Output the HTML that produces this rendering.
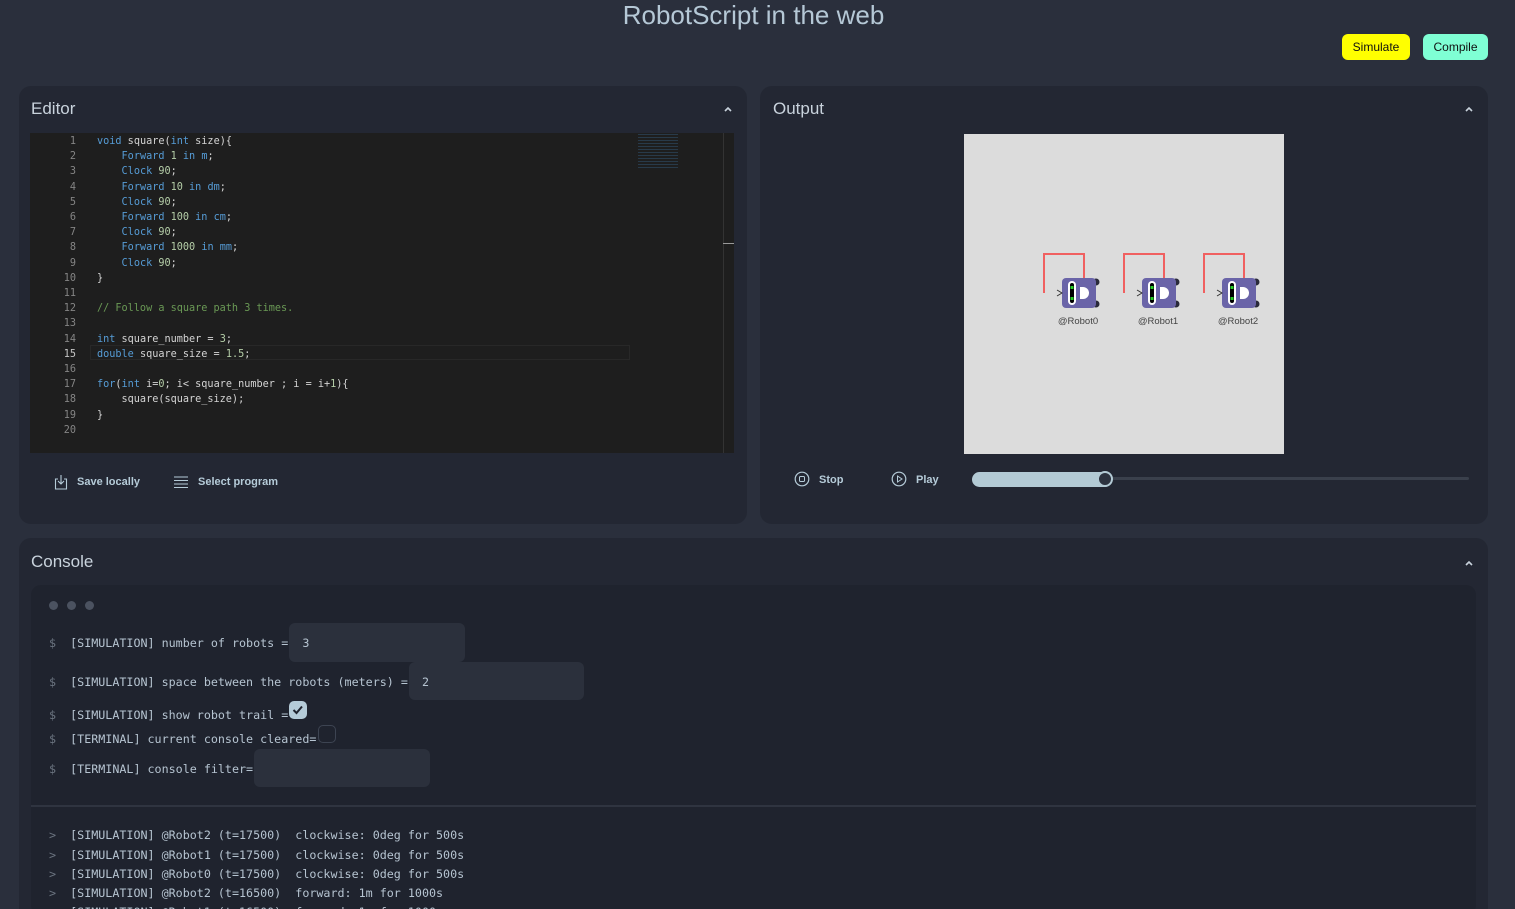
<!DOCTYPE html>
<html style="height:909px;overflow:hidden"><head><meta charset="utf-8"><style>
*{box-sizing:border-box;margin:0;padding:0}
body{width:1515px;height:909px;overflow:hidden;background:#2a2f3c;font-family:"Liberation Sans",sans-serif;color:#c9d3dd;position:relative}
.title{position:absolute;top:0;left:0;width:1507px;text-align:center;font-size:26px;color:#b5c8d6;line-height:30px}
.btn{position:absolute;top:34px;height:26px;border-radius:6px;font-size:12px;color:#111;line-height:26px;text-align:center}
.panel{position:absolute;background:#232733;border-radius:12px}
.ph{position:absolute;left:12px;top:13px;font-size:17px;color:#c9d3dd}
.car{position:absolute;top:18px;width:10px;height:10px}
.code{position:absolute;left:11px;top:47px;width:704px;height:320px;background:#1e1e1e;font-family:"DejaVu Sans Mono","Liberation Mono",monospace;font-size:10.2px;color:#d4d4d4}
.ln{position:absolute;left:0;width:46px;text-align:right;color:#858585}
.cl{position:absolute;left:67px;white-space:pre}
.k{color:#569cd6}.n{color:#b5cea8}.c{color:#6a9955}
.mono{font-family:"DejaVu Sans Mono","Liberation Mono",monospace}
.con{position:absolute;left:31px;top:585px;width:1445px;height:330px;background:#1f232e;border-radius:10px;font-size:11.7px;color:#b6c4d1}
.row{position:absolute;left:18px;white-space:pre}
.d{color:#6b7480}
.inp{position:absolute;background:#2b303c;border-radius:6px}
</style></head><body>
<div class="title">RobotScript in the web</div>
<div class="btn" style="left:1342px;width:68px;background:#ffff00">Simulate</div>
<div class="btn" style="left:1423px;width:65px;background:#7fffd4">Compile</div>

<div class="panel" style="left:19px;top:86px;width:728px;height:438px">
<div class="ph">Editor</div>
<svg class="car" style="left:704px" viewBox="0 0 10 10"><path d="M2 7L5 4L8 7" stroke="#c9d3dd" stroke-width="1.6" fill="none"/></svg>
<div class="code">
<div style="position:absolute;left:693px;top:0;width:1px;height:320px;background:#333"></div>
<div style="position:absolute;left:693px;top:110px;width:11px;height:1px;background:#999"></div>
<div style="position:absolute;left:60px;top:212px;width:540px;height:15px;border:1px solid #282828"></div>
<div style="position:absolute;left:608px;top:1px;width:40px;height:36px;opacity:.35;background:repeating-linear-gradient(#3a6d9a 0 1px,transparent 1px 3px)"></div>
<div id="lines"></div>
</div>
<div style="position:absolute;left:35px;top:390px;font-size:11px;font-weight:bold;color:#b5cbd8">
<svg style="position:absolute;left:0;top:-2px" width="14" height="16" viewBox="0 0 14 16"><path d="M4 5H1.5V15H12.5V5H10M7 1V10M4 7L7 10L10 7" stroke="#b5cbd8" fill="none" stroke-width="1.1"/></svg>
<span style="position:absolute;left:23px;white-space:nowrap">Save locally</span>
<svg style="position:absolute;left:120px;top:0" width="14" height="13" viewBox="0 0 14 13"><path d="M0 1H14M0 4.5H14M0 8H14M0 11.5H14" stroke="#b5cbd8" stroke-width="1.1"/></svg>
<span style="position:absolute;left:144px;white-space:nowrap">Select program</span>
</div>
</div>

<div class="panel" style="left:760px;top:86px;width:728px;height:438px">
<div class="ph" style="left:13px">Output</div>
<svg class="car" style="left:704px" viewBox="0 0 10 10"><path d="M2 7L5 4L8 7" stroke="#c9d3dd" stroke-width="1.6" fill="none"/></svg>
<svg style="position:absolute;left:204px;top:48px" width="320" height="320" viewBox="0 0 320 320">
<rect width="320" height="320" fill="#dcdcdc"/>
<g id="robots"></g>
</svg>
<svg style="position:absolute;left:34px;top:385px" width="16" height="16" viewBox="0 0 16 16"><circle cx="8" cy="8" r="6.8" stroke="#b5cbd8" fill="none" stroke-width="1.2"/><rect x="5.5" y="5.5" width="5" height="5" rx="1" stroke="#b5cbd8" fill="none"/></svg>
<div style="position:absolute;left:59px;top:388px;font-size:11px;font-weight:bold;color:#b5cbd8">Stop</div>
<svg style="position:absolute;left:131px;top:385px" width="16" height="16" viewBox="0 0 16 16"><circle cx="8" cy="8" r="6.8" stroke="#b5cbd8" fill="none" stroke-width="1.2"/><path d="M6.5 5L11 8L6.5 11Z" stroke="#b5cbd8" fill="none"/></svg>
<div style="position:absolute;left:156px;top:388px;font-size:11px;font-weight:bold;color:#b5cbd8">Play</div>
<div style="position:absolute;left:212px;top:391px;width:497px;height:3px;background:#3a404c;border-radius:2px"></div>
<div style="position:absolute;left:212px;top:386px;width:140px;height:15px;background:#b3cad5;border-radius:8px"></div>
<div style="position:absolute;left:337px;top:385px;width:16px;height:16px;background:#2d3340;border:2px solid #b3cad5;border-radius:50%"></div>
</div>

<div class="panel" style="left:19px;top:538px;width:1469px;height:400px">
<div class="ph" style="top:14px">Console</div>
<svg class="car" style="left:1445px;top:20px" viewBox="0 0 10 10"><path d="M2 7L5 4L8 7" stroke="#c9d3dd" stroke-width="1.6" fill="none"/></svg>
</div>
<div class="con mono">
<div style="position:absolute;left:18px;top:16px;width:9px;height:9px;border-radius:50%;background:#4b5260"></div>
<div style="position:absolute;left:36px;top:16px;width:9px;height:9px;border-radius:50%;background:#4b5260"></div>
<div style="position:absolute;left:54px;top:16px;width:9px;height:9px;border-radius:50%;background:#4b5260"></div>
<div class="inp" style="left:258px;top:38px;width:176px;height:39px"></div>
<div class="inp" style="left:378px;top:77px;width:175px;height:38px"></div>
<div class="inp" style="left:223px;top:164px;width:176px;height:38px"></div>
<div class="row" style="top:51px"><span class="d">$</span>  [SIMULATION] number of robots =  3</div>
<div class="row" style="top:90px"><span class="d">$</span>  [SIMULATION] space between the robots (meters) =  2</div>
<div class="row" style="top:123px"><span class="d">$</span>  [SIMULATION] show robot trail =</div>
<div style="position:absolute;left:258px;top:116px;width:18px;height:18px;background:#b5cbd8;border-radius:5px"><svg width="18" height="18" viewBox="0 0 18 18"><path d="M4.5 9L7.5 12L13 5.5" stroke="#1f232e" stroke-width="2" fill="none"/></svg></div>
<div class="row" style="top:147px"><span class="d">$</span>  [TERMINAL] current console cleared=</div>
<div style="position:absolute;left:287px;top:140px;width:18px;height:18px;border:1.5px solid #3d4452;border-radius:5px"></div>
<div class="row" style="top:177px"><span class="d">$</span>  [TERMINAL] console filter=</div>
<div style="position:absolute;left:0;top:220px;width:1445px;height:2px;background:#2f3440"></div>
<div class="row" style="top:243px"><span class="d">&gt;</span>  [SIMULATION] @Robot2 (t=17500)  clockwise: 0deg for 500s</div>
<div class="row" style="top:263px"><span class="d">&gt;</span>  [SIMULATION] @Robot1 (t=17500)  clockwise: 0deg for 500s</div>
<div class="row" style="top:282px"><span class="d">&gt;</span>  [SIMULATION] @Robot0 (t=17500)  clockwise: 0deg for 500s</div>
<div class="row" style="top:301px"><span class="d">&gt;</span>  [SIMULATION] @Robot2 (t=16500)  forward: 1m for 1000s</div>
<div class="row" style="top:320px"><span class="d">&gt;</span>  [SIMULATION] @Robot1 (t=16500)  forward: 1m for 1000s</div>
</div>
<script>
var L=[
'<span class="k">void</span> square(<span class="k">int</span> size){',
'    <span class="k">Forward</span> <span class="n">1</span> <span class="k">in</span> <span class="k">m</span>;',
'    <span class="k">Clock</span> <span class="n">90</span>;',
'    <span class="k">Forward</span> <span class="n">10</span> <span class="k">in</span> <span class="k">dm</span>;',
'    <span class="k">Clock</span> <span class="n">90</span>;',
'    <span class="k">Forward</span> <span class="n">100</span> <span class="k">in</span> <span class="k">cm</span>;',
'    <span class="k">Clock</span> <span class="n">90</span>;',
'    <span class="k">Forward</span> <span class="n">1000</span> <span class="k">in</span> <span class="k">mm</span>;',
'    <span class="k">Clock</span> <span class="n">90</span>;',
'}','',
'<span class="c">// Follow a square path 3 times.</span>','',
'<span class="k">int</span> square_number = <span class="n">3</span>;',
'<span class="k">double</span> square_size = <span class="n">1.5</span>;','',
'<span class="k">for</span>(<span class="k">int</span> i=<span class="n">0</span>; i&lt; square_number ; i = i+<span class="n">1</span>){',
'    square(square_size);','}',''];
var h='';L.forEach(function(s,i){var t=3+i*15.2;h+='<div class="ln" style="top:'+t+'px'+(i==14?';color:#c6c6c6':'')+'">'+(i+1)+'</div><div class="cl" style="top:'+t+'px">'+s+'</div>';});
document.getElementById('lines').innerHTML=h;
var g='';[0,1,2].forEach(function(i){var x=80+i*80;
g+='<path d="M'+x+' 159V120H'+(x+40)+'V144" stroke="#f06060" stroke-width="2" fill="none"/>'+
'<circle cx="'+(x+52)+'" cy="'+(148)+'" r="3.5" fill="#2a2a3a"/><circle cx="'+(x+52)+'" cy="'+(170)+'" r="3.5" fill="#2a2a3a"/>'+
'<rect x="'+(x+18)+'" y="144" width="34" height="30" rx="4" fill="#6a64a8"/>'+
'<rect x="'+(x+24)+'" y="147" width="8" height="24" rx="4" fill="#fff"/><rect x="'+(x+26)+'" y="149" width="4" height="20" rx="2" fill="#000"/>'+
'<rect x="'+(x+26.5)+'" y="152" width="3" height="3" fill="#2c2"/><rect x="'+(x+26.5)+'" y="163" width="3" height="3" fill="#2c2"/>'+
'<path d="M'+(x+36)+' 153H'+(x+39)+'A6 6 0 0 1 '+(x+39)+' 165H'+(x+36)+'Z" fill="#fff"/>'+
'<path d="M'+(x+13)+' 156L'+(x+18)+' 159L'+(x+13)+' 162" stroke="#333" fill="none"/>'+
'<text x="'+(x+34)+'" y="190" font-size="9.5" text-anchor="middle" fill="#444" font-family="Liberation Sans">@Robot'+i+'</text>';});
document.getElementById('robots').innerHTML=g;
</script>
</body></html>
